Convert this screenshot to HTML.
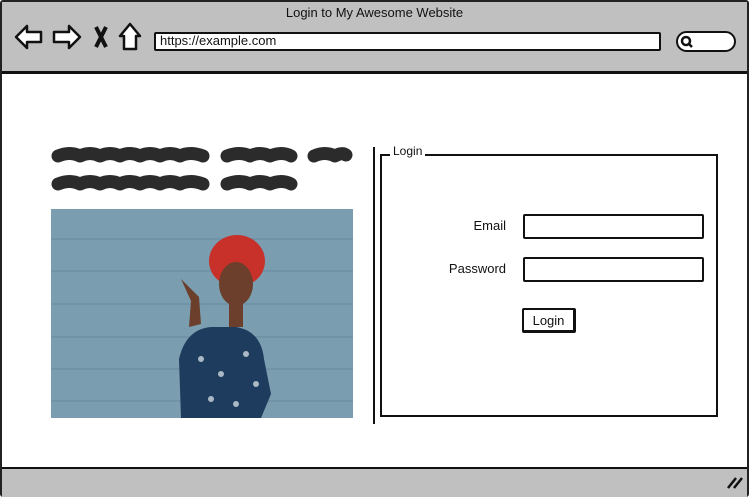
<!DOCTYPE html>
<html><head><style>
body{margin:0;width:749px;height:497px;overflow:hidden;font-family:"Liberation Sans",sans-serif;background:#fff;position:relative}
.a{position:absolute}
.in{border:2px solid #111;background:#fff;box-sizing:border-box;border-radius:2px}
</style></head><body>
<div class="a" style="left:0;top:0;width:749px;height:497px;box-sizing:border-box;border:2px solid #222;border-radius:3px"></div>
<div class="a" style="left:2px;top:2px;width:745px;height:69px;background:#c0c0c0;border-bottom:3px solid #111"></div>
<div class="a" style="left:0;top:5px;width:749px;text-align:center;font-size:13px;color:#111">Login to My Awesome Website</div>
<svg class="a" style="left:14px;top:22px" width="132" height="30" viewBox="0 0 132 30" fill="#fff" stroke="#111" stroke-width="2.5" stroke-linejoin="round">
<path d="M2 15 L13 4 L13 10 L27 10 L27 20 L13 20 L13 26 Z"/>
<path d="M66 15 L55 4 L55 10 L40 10 L40 20 L55 20 L55 26 Z"/>
<path d="M82 5 L92 25 M92 5 L82 25" stroke-width="4" fill="none"/>
<path d="M116 2 L106 14 L110 14 L110 27 L122 27 L122 14 L126 14 Z"/>
</svg>
<div class="a in" style="left:154px;top:32px;width:507px;height:19px;border-width:2.5px"></div>
<div class="a" style="left:160px;top:33px;font-size:13px;color:#111">https://example.com</div>
<div class="a in" style="left:676px;top:31px;width:60px;height:21px;border-radius:11px;border-width:2.5px"></div>
<svg class="a" style="left:680px;top:35px" width="14" height="14"><circle cx="6" cy="6" r="4" fill="none" stroke="#111" stroke-width="2.5"/><path d="M9 9 L12 12" stroke="#111" stroke-width="2.5"/></svg>
<div class="a" style="left:2px;top:467px;width:745px;height:28px;background:#c0c0c0;border-top:2px solid #111"></div>
<svg class="a" style="left:726px;top:474px" width="18" height="16"><path d="M2 14 L10 4 M8 14 L16 4" stroke="#111" stroke-width="2.5"/></svg>
<svg class="a" style="left:50px;top:143px" width="305" height="55" fill="none" stroke="#2b2b2b" stroke-width="13" stroke-linecap="round" stroke-linejoin="round">
<path d="M8 13 Q20 8 30 13 Q40 8 50 13 Q60 8 70 13 Q80 8 90 13 Q100 8 110 13 Q120 8 130 13 Q140 8 153 13"/>
<path d="M177 13 Q190 8 200 13 Q210 8 220 13 Q232 8 241 13"/>
<path d="M264 13 Q275 8 285 13 Q292 9 296 12"/>
<path d="M8 41 Q20 36 30 41 Q40 36 50 41 Q60 36 70 41 Q80 36 90 41 Q100 36 110 41 Q120 36 130 41 Q140 36 153 41"/>
<path d="M177 41 Q190 36 200 41 Q210 36 220 41 Q232 36 241 41"/>
</svg>
<svg class="a" style="left:51px;top:209px" width="302" height="209">
<rect width="302" height="209" fill="#7a9db0"/>
<g stroke="#6a8ea2" stroke-width="2" opacity=".6"><path d="M0 30H302M0 62H302M0 95H302M0 128H302M0 160H302M0 192H302"/></g>
<path d="M130 209 L128 150 Q135 120 160 118 L185 118 Q210 122 213 150 L220 185 L210 209 Z" fill="#1d3c5e"/>
<path d="M140 160 L133 185 L150 190 Z" fill="#1d3c5e"/>
<ellipse cx="186" cy="52" rx="28" ry="26" fill="#c8302a"/>
<ellipse cx="185" cy="75" rx="17" ry="22" fill="#6b3f2c"/>
<rect x="178" y="92" width="14" height="26" fill="#6b3f2c"/>
<path d="M130 70 L148 88 L150 115 L138 118 L140 92 Z" fill="#6b3f2c"/>
<g fill="#e8eef2" opacity=".7"><circle cx="150" cy="150" r="3"/><circle cx="170" cy="165" r="3"/><circle cx="195" cy="145" r="3"/><circle cx="205" cy="175" r="3"/><circle cx="160" cy="190" r="3"/><circle cx="185" cy="195" r="3"/></g>
</svg>
<div class="a" style="left:373px;top:147px;width:2px;height:277px;background:#111"></div>
<div class="a" style="left:380px;top:154px;width:338px;height:263px;border:2px solid #111;box-sizing:border-box"></div>
<div class="a" style="left:390px;top:144px;background:#fff;padding:0 3px;font-size:12px;color:#111">Login</div>
<div class="a" style="left:400px;top:218px;width:106px;text-align:right;font-size:13px;color:#111">Email</div>
<div class="a in" style="left:523px;top:214px;width:181px;height:25px"></div>
<div class="a" style="left:400px;top:261px;width:106px;text-align:right;font-size:13px;color:#111">Password</div>
<div class="a in" style="left:523px;top:257px;width:181px;height:25px"></div>
<div class="a in" style="left:522px;top:308px;width:54px;height:25px;border-right-width:3px;border-bottom-width:3px;font-size:13px;text-align:center;line-height:21px;color:#111">Login</div>
</body></html>
